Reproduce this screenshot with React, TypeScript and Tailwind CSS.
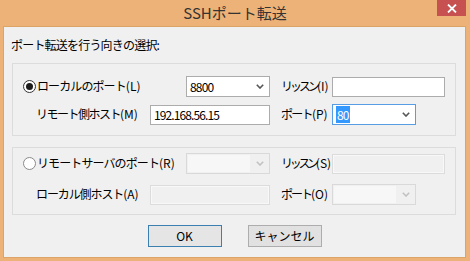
import React from "react";

const jp = "font-['Noto_Sans_CJK_JP',sans-serif]";

function Chevron({ disabled }: { disabled?: boolean }) {
  return (
    <svg width="8" height="5" viewBox="0 0 8 5" className="shrink-0">
      <polyline
        points="0.8,0.8 4,4 7.2,0.8"
        fill="none"
        stroke={disabled ? "#C2C2C2" : "#555555"}
        strokeWidth="1.6"
      />
    </svg>
  );
}

function Radio({ checked }: { checked?: boolean }) {
  return (
    <span
      className={`flex h-[13px] w-[13px] shrink-0 items-center justify-center rounded-full border bg-white ${
        checked ? "border-[#333333]" : "border-[#8a8a8a]"
      }`}
    >
      {checked && <span className="h-[7px] w-[7px] rounded-full bg-[#1c1c1c]" />}
    </span>
  );
}

function Combo({
  value,
  width,
  focused,
  disabled,
  selected,
}: {
  value?: string;
  width: string;
  focused?: boolean;
  disabled?: boolean;
  selected?: boolean;
}) {
  if (disabled) {
    return (
      <div className={`flex h-[21px] ${width} shrink-0 items-center border border-[#D9D9D9] bg-[#F0F0F0]`}>
        <div className="ml-[1px] h-[17px] flex-1 bg-[#F7F7F7]" />
        <div className="flex w-[19px] justify-center">
          <Chevron disabled />
        </div>
      </div>
    );
  }
  return (
    <div
      className={`flex h-[21px] ${width} shrink-0 items-center border bg-white pl-[3px] ${
        focused ? "border-[#569DE5]" : "border-[#ACACAC]"
      }`}
    >
      <span className="flex-1 text-[12px] leading-[15px] tracking-[-0.8px] text-black">
        {selected ? (
          <span className="bg-[#3399FF] px-[1px] text-white">{value}</span>
        ) : (
          value
        )}
      </span>
      <div className="flex w-[19px] justify-center">
        <Chevron />
      </div>
    </div>
  );
}

function Field({ value, width, disabled }: { value?: string; width: string; disabled?: boolean }) {
  return (
    <div
      className={`flex h-[20px] ${width} shrink-0 items-center border pl-[3px] text-[12px] tracking-[-0.9px] ${
        disabled
          ? "border-[#DCDCDC] bg-[#F0F0F0] shadow-[inset_0_0_0_1px_#F8F8F8]"
          : "border-[#ACACAC] bg-white text-black"
      }`}
    >
      {value}
    </div>
  );
}

// kana part gets squeezed (Meiryo UI kana are narrow), the "(X)" key stays normal
function Label({
  text,
  hotkey,
  tight,
  className = "",
}: {
  text: string;
  hotkey: string;
  tight: string;
  className?: string;
}) {
  return (
    <span className={`mb-[2px] shrink-0 whitespace-nowrap text-[12px] leading-[16px] text-black ${className}`}>
      <span className={tight}>{text}</span>({hotkey})
    </span>
  );
}

function Button({ children, primary }: { children: React.ReactNode; primary?: boolean }) {
  return (
    <div
      className={`flex h-[22px] w-[74px] items-center justify-center border text-[12px] text-black ${
        primary ? "border-[#3C7FB1] bg-[#E5E5E5]" : "border-[#ADADAD] bg-[#E1E1E1]"
      }`}
    >
      {children}
    </div>
  );
}

export default function App() {
  return (
    <div className={`flex h-[261px] w-[470px] flex-col bg-[#EDB277] ${jp}`}>
      <div className="relative flex h-[26px] items-center justify-center">
        <span className="text-[15px] leading-[20px] text-[#333333]">SSHポート転送</span>
        <div className="absolute right-[4px] top-0 flex h-[16px] w-[29px] items-center justify-center bg-[#C75050]">
          <svg width="10" height="9" viewBox="0 0 10 9">
            <path d="M1 0.5 L9 8.5 M9 0.5 L1 8.5" stroke="#ffffff" strokeWidth="1.8" />
          </svg>
        </div>
      </div>

      <div className="mb-[3px] ml-[3px] mr-[4px] flex flex-1 flex-col border border-[#DDA468] bg-[#F0F0F0]">
        <div className="pl-[7px] pt-[10px] text-[12px] leading-[16px] tracking-[-0.8px] text-black">
          ポート転送を行う向きの選択:
        </div>

        {/* local forwarding */}
        <div className="ml-[8px] mt-[10px] flex h-[73px] w-[444px] flex-col gap-[7px] border border-[#DCDCDC] pt-[12px]">
          <div className="flex h-[21px] items-center">
            <div className="ml-[10px] flex w-[163px] items-center gap-[1px]">
              <Radio checked />
              <Label text="ローカルのポート" hotkey="L" tight="tracking-[-0.9px]" />
            </div>
            <Combo value="8800" width="w-[84px]" />
            <Label text="リッスン" hotkey="I" tight="tracking-[-3px]" className="ml-[11px] w-[51px]" />
            <Field width="w-[113px]" />
          </div>
          <div className="flex h-[21px] items-center">
            <Label text="リモート側ホスト" hotkey="M" tight="tracking-[-1.5px]" className="ml-[23px] w-[114px]" />
            <Field value="192.168.56.15" width="w-[120px]" />
            <Label text="ポート" hotkey="P" tight="tracking-[-1.7px]" className="ml-[11px] w-[51px]" />
            <Combo value="80" width="w-[84px]" focused selected />
          </div>
        </div>

        {/* remote forwarding */}
        <div className="ml-[8px] mt-[11px] flex h-[68px] w-[444px] flex-col gap-[10px] border border-[#DCDCDC] pt-[5px]">
          <div className="flex h-[21px] items-center">
            <div className="ml-[10px] flex w-[163px] items-center gap-[1px]">
              <Radio />
              <Label text="リモートサーバのポート" hotkey="R" tight="tracking-[-0.9px]" />
            </div>
            <Combo width="w-[84px]" disabled />
            <Label text="リッスン" hotkey="S" tight="tracking-[-3.3px]" className="ml-[11px] w-[51px]" />
            <Field width="w-[113px]" disabled />
          </div>
          <div className="flex h-[21px] items-center">
            <Label text="ローカル側ホスト" hotkey="A" tight="tracking-[-1.1px]" className="ml-[23px] w-[114px]" />
            <Field width="w-[120px]" disabled />
            <Label text="ポート" hotkey="O" tight="tracking-[-2px]" className="ml-[11px] w-[51px]" />
            <Combo width="w-[84px]" disabled />
          </div>
        </div>

        <div className="mt-[10px] flex justify-center gap-[26px]">
          <Button primary>OK</Button>
          <Button>キャンセル</Button>
        </div>
      </div>
    </div>
  );
}
